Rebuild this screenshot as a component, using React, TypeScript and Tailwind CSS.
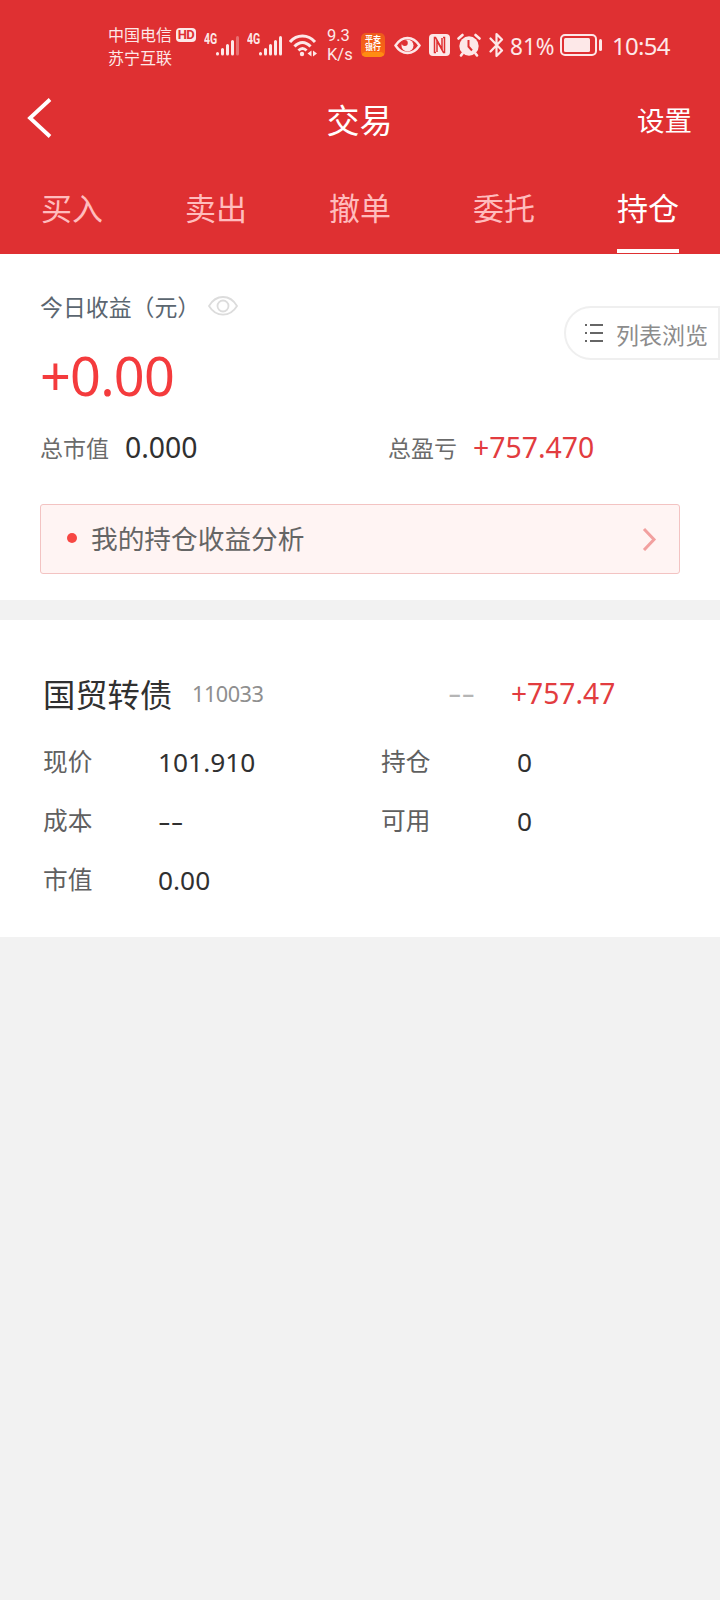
import React from 'react';

const tabs = ['买入', '卖出', '撤单', '委托', '持仓'];

const details = [
  { label: '现价', value: '101.910', label2: '持仓', value2: '0' },
  { label: '成本', value: '--', label2: '可用', value2: '0' },
  { label: '市值', value: '0.00', label2: '', value2: '' },
];

const Signal = ({ weak = false }: { weak?: boolean }) => (
  <div className="relative h-[24px] w-[36px]">
    <svg className="h-[24px] w-[36px]" viewBox="0 0 36 24" fill="none" stroke="#fde8e8" strokeWidth="3" strokeLinecap="round">
      <path d="M13.5 19.5v.5M18.5 15.500V20M23.5 11.500V20M28.500 7.500V20" />
      <path d="M33.500 3.500V20" opacity={weak ? 0.35 : 1} />
    </svg>
    <span className="absolute top-[-2px] left-0 origin-left scale-x-[0.75] font-[Roboto] text-[14px] leading-[14px] font-bold">4G</span>
  </div>
);

const StatusBar = () => (
  <div className="flex h-[80px] items-start pt-[24px] pl-[108px] text-[#fde8e8]">
    <div className="-mt-px w-[96px] text-[16px] leading-[23px]">
      <div className="flex items-center">
        <span>中国电信</span>
        <span className="ml-[4px] flex h-[14px] w-[20px] items-center justify-center rounded-[4px] bg-[#fde8e8] font-[Roboto] text-[13px] leading-none font-bold tracking-[-0.5px] text-[#df3032]">HD</span>
      </div>
      <div>苏宁互联</div>
    </div>
    <div className="mt-[10px] flex w-[85px] gap-[7px]">
      <Signal weak />
      <Signal />
    </div>
    <svg className="mt-[9px] h-[26px] w-[28px]" viewBox="0 0 28 26" fill="none" stroke="#fde8e8" strokeWidth="3">
      <path d="M1 9C8 1 19 1 26 9M5.500 13.500C10.500 8 16.500 8 21.500 13.500M9.500 17.500C12 15 15 15 17.500 17.500" />
      <circle cx="13" cy="21" r="2.200" fill="#fde8e8" stroke="none" />
      <path d="M18.500 20.500l4-3v6zM28 20.500l-4-3v6z" fill="#fde8e8" stroke="none" />
    </svg>
    <div className="ml-[10px] w-[34px] pt-[2px] font-[Roboto] text-[16.500px] leading-[19px]">
      <div>9.3</div>
      <div>K/s</div>
    </div>
    <div className="mt-[9px] flex h-[24px] w-[24px] flex-col items-center overflow-hidden rounded-[5px] bg-linear-to-b from-[#ee5a1c] to-[#fb6a10] pt-[2px] text-[8px] leading-[8px] font-bold text-white">
      <span>平安</span>
      <span>银行</span>
      <span className="mt-px h-[6px] w-[24px] rounded-t-full bg-[#ff8c12]" />
    </div>
    <svg className="mt-[12px] ml-[9px] h-[19px] w-[27px]" viewBox="0 0 27 19" fill="none">
      <path d="M1.500 9.500C8-.5 19-.5 25.500 9.500C19 19.500 8 19.500 1.500 9.500z" stroke="#fde8e8" strokeWidth="2.400" />
      <circle cx="13.500" cy="9.500" r="6" fill="#fde8e8" />
      <circle cx="10.800" cy="7" r="3" fill="#df3032" />
    </svg>
    <svg className="mt-[10px] ml-[8px] h-[22px] w-[21px]" viewBox="0 0 21 22" fill="none">
      <rect width="21" height="22" rx="4" fill="#fde8e8" />
      <path d="M7 18.500H5.500V3.500H6.500L13 15V4" stroke="#df3032" strokeWidth="1.500" />
      <path d="M14 3.500H15.500V18.500H14.500L8 7V18" stroke="#df3032" strokeWidth="1.500" />
    </svg>
    <svg className="mt-[9px] ml-[7px] h-[24px] w-[24px]" viewBox="0 0 24 24" fill="none">
      <circle cx="12" cy="13" r="9.700" fill="#fde8e8" />
      <path d="M1.500 5.500L5.500 2M22.500 5.500L18.500 2M5.500 20.500L4 22.500M18.500 20.500L20 22.500" stroke="#fde8e8" strokeWidth="2.600" strokeLinecap="round" />
      <path d="M11.500 7V13.500L15 17.500" stroke="#df3032" strokeWidth="2" />
    </svg>
    <svg className="mt-[8px] ml-[8px] h-[26px] w-[15px]" viewBox="0 0 15 26" fill="none" stroke="#fde8e8" strokeWidth="2.200" strokeLinejoin="round" strokeLinecap="round">
      <path d="M1.500 6.500L13 18.500L7.500 24V2L13 7.500L1.500 19.500" />
    </svg>
    <span className="mt-[8px] ml-[6px] w-[50px] font-['Noto_Sans'] text-[24px] leading-[28px]">
      <span className="inline-block origin-left scale-x-[0.94]">81%</span>
    </span>
    <svg className="mt-[10px] h-[22px] w-[43px]" viewBox="0 0 43 22" fill="none">
      <rect x="1" y="1" width="35" height="20" rx="4" stroke="#fde8e8" strokeWidth="2" />
      <rect x="4" y="4" width="26" height="14" rx="1.500" fill="#fde8e8" />
      <rect x="39" y="5" width="3" height="12" rx="1.500" fill="#fde8e8" />
    </svg>
    <span className="mt-[8px] ml-[9px] font-['Noto_Sans'] text-[24px] leading-[28px] tracking-[-0.7px]">10:54</span>
  </div>
);

const Header = () => (
  <header className="h-[254px] bg-[#df3032] text-white">
    <StatusBar />
    <div className="grid h-[80px] grid-cols-3 items-center pr-[28px] pl-[27px]">
      <svg className="-mt-[5px] h-[42px] w-[26px]" viewBox="0 0 26 42" fill="none" stroke="#fff" strokeWidth="3.800">
        <path d="M23 2.500L3 21L23 39.500" />
      </svg>
      <h1 className="-mt-[3px] text-center text-[33px] leading-[40px]">交易</h1>
      <span className="-mt-[3px] text-right text-[27.500px] leading-[40px]">设置</span>
    </div>
    <nav className="grid h-[94px] grid-cols-5">
      {tabs.map((tab) => (
        <div key={tab} className="flex justify-center">
          <span
            className={
              tab === '持仓'
                ? 'h-[93px] border-b-4 border-white pt-[27px] text-[31px] leading-[40px]'
                : 'pt-[27px] text-[31px] leading-[40px] text-[#ffbcbd]'
            }
          >
            {tab}
          </span>
        </div>
      ))}
    </nav>
  </header>
);

const Summary = () => (
  <section className="h-[346px] bg-white px-[40px] pt-[35px]">
    <div className="flex h-[34px] items-center">
      <span className="-mt-px w-[168px] text-[22.900px] leading-[34px] whitespace-nowrap text-[#5b6670]">今日收益（元）</span>
      <svg className="h-[20px] w-[30px]" viewBox="0 0 30 20" fill="none" stroke="#dcdcdc" strokeWidth="1.800">
        <path d="M1 10C8-2 22-2 29 10C22 21.500 8 21.500 1 10z" />
        <circle cx="15" cy="10" r="5.500" />
      </svg>
      {/* sticks to the right edge of the screen */}
      <div className="mt-[54px] -mr-[40px] ml-auto flex h-[54px] w-[156px] items-center rounded-l-full border-2 border-[#efefef] pl-[19px]">
        <svg className="h-[20px] w-[18px]" viewBox="0 0 18 20" stroke="#666" strokeWidth="2">
          <path d="M5 2H18M5 10H18M5 18H18M0 2H2M0 10H2M0 18H2" />
        </svg>
        <span className="mt-[2px] ml-[13px] text-[23px] leading-[30px] whitespace-nowrap text-[#8c8c8c]">列表浏览</span>
      </div>
    </div>
    <div className="mt-[16px] h-[72px] font-['Noto_Sans'] text-[54px] leading-[72px] tracking-[-0.8px] text-[#f43b3d]">+0.00</div>
    <div className="mt-[14px] flex h-[44px] items-center">
      <span className="w-[85px] text-[23px] text-[#6b6b6b]">总市值</span>
      <span className="w-[263px] font-['Noto_Sans'] text-[28.400px] text-[#303030]">0.000</span>
      <span className="w-[85px] text-[23px] text-[#6b6b6b]">总盈亏</span>
      <span className="font-['Noto_Sans'] text-[28.400px] text-[#e23c3f]">+757.470</span>
    </div>
    <div className="mt-[35px] flex h-[70px] items-center rounded-[3px] border border-[#f3c3c2] bg-[#fff4f3] pr-[22px] pl-[26px]">
      <span className="-mt-[2px] h-[10px] w-[10px] rounded-full bg-[#f74743]" />
      <span className="-mt-[3px] ml-[14px] text-[26.700px] leading-[40px] text-[#656565]">我的持仓收益分析</span>
      <svg className="ml-auto h-[24px] w-[15px]" viewBox="0 0 15 24" fill="none" stroke="#f2a09f" strokeWidth="3">
        <path d="M2 2L12 12.500L2 23" />
      </svg>
    </div>
  </section>
);

const Holding = () => (
  <section className="mt-[20px] h-[317px] bg-white pt-[48px] pl-[43px]">
    <div className="flex h-[52px] items-center">
      <span className="-mt-[3px] w-[149px] text-[32.300px] leading-[50px] text-[#303030]">国贸转债</span>
      <span className="w-[256px] font-['Noto_Sans'] text-[21.700px] leading-[50px] tracking-[-0.5px] text-[#8f8f8f]">110033</span>
      <span className="-mt-[4px] w-[63px] font-['Noto_Sans'] text-[28px] text-[#b5b5b5]">
        <span className="inline-block origin-left scale-x-[1.5]">--</span>
      </span>
      <span className="-mt-[2px] font-['Noto_Sans'] text-[28.200px] text-[#e23c3f]">+757.47</span>
    </div>
    <div className="mt-[12px]">
      {details.map((row) => (
        <div key={row.label} className="flex h-[59px] items-center text-[24.700px] text-[#606060]">
          <span className="-mt-px w-[115px]">{row.label}</span>
          <span className="mt-[3px] w-[223px] font-['Noto_Sans'] text-[26.300px] text-[#303030]">
            <span className={row.value === '--' ? 'inline-block origin-left scale-x-[1.5]' : ''}>{row.value}</span>
          </span>
          <span className="-mt-px w-[136px]">{row.label2}</span>
          <span className="mt-[3px] font-['Noto_Sans'] text-[26.300px] text-[#303030]">{row.value2}</span>
        </div>
      ))}
    </div>
  </section>
);

function App() {
  return (
    <div className="min-h-[1600px] w-[720px] overflow-hidden bg-[#f2f2f2] font-['Noto_Sans_CJK_SC',sans-serif]">
      <Header />
      <Summary />
      <Holding />
    </div>
  );
}

export default App;
